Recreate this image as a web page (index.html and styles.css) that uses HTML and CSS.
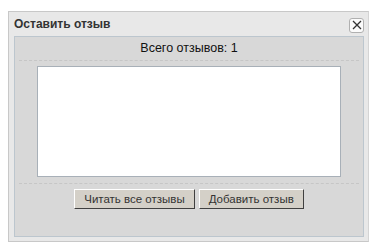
FILE: index.html
```html
<!DOCTYPE html>
<html lang="ru">
<head>
    <meta charset="UTF-8">
    <title>Оставить отзыв</title>
    <link rel="stylesheet" href="styles.css">
</head>
<body>
    <div class="dialog">
        <div class="dialog-title">
            <span>Оставить отзыв</span>
            <button class="close" title="Закрыть">
                <svg width="10" height="10" viewBox="0 0 10 10"><path d="M1 1L9 9M9 1L1 9" stroke="#333" stroke-width="1.3"/></svg>
            </button>
        </div>
        <div class="dialog-body">
            <div class="count">Всего отзывов: 1</div>
            <div class="reviews">
                <div class="review-box"></div>
            </div>
            <div class="actions">
                <button class="btn">Читать все отзывы</button>
                <button class="btn">Добавить отзыв</button>
            </div>
        </div>
    </div>
</body>
</html>
```

FILE: styles.css
```css
body {
    margin: 0;
    background: #fff;
    font-family: 'Liberation Sans', Tahoma, sans-serif;
    font-size: 11px;
    color: #222;
}
.dialog {
    margin: 11px 0 0 8px;
    width: 350px;
    height: 225px;
    padding: 0 4px 4px 5px;
    background: #e8e8e8;
    border: 1px solid #c8c8c8;
    border-right-color: #d4d4d4;
    display: flex;
    flex-direction: column;
}
.dialog-title {
    height: 24px;
    display: flex;
    align-items: center;
    justify-content: space-between;
    font-weight: bold;
    font-size: 12px;
    color: #333;
}
.close {
    width: 15px;
    height: 15px;
    padding: 0;
    margin-top: 2px;
    border: 1px solid #b0b0b0;
    border-radius: 3px;
    background: #fbfbfb;
    display: flex;
    align-items: center;
    justify-content: center;
}
.dialog-body {
    flex: 1;
    background: #d8d8d8;
    border: 1px solid #bcc6ce;
    padding: 0 4px;
    display: flex;
    flex-direction: column;
}
.count {
    height: 23px;
    line-height: 22px;
    font-size: 12.5px;
    color: #111;
    text-align: center;
    border-bottom: 1px dashed #c6c6c6;
}
.reviews {
    padding: 5px 18px 6px 18px;
    border-bottom: 1px dashed #c6c6c6;
}
.review-box {
    height: 109px;
    background: #fff;
    border: 1px solid #a8b0b8;
}
.actions {
    display: flex;
    justify-content: center;
    gap: 4px;
    padding-top: 5px;
}
.btn {
    font-family: inherit;
    font-size: 11.5px;
    color: #333;
    height: 20px;
    padding: 0 9px;
    background: #d4d0c8;
    border: 1px solid;
    border-color: #fff #404040 #404040 #fff;
}
```
